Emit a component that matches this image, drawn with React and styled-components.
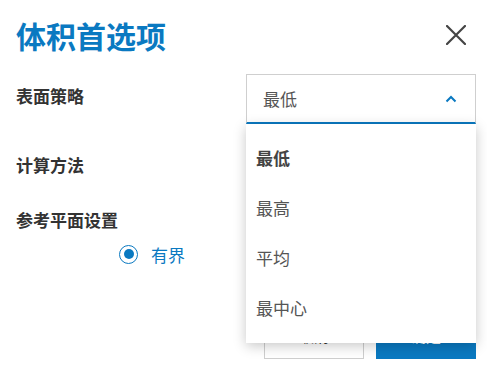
import React from "react";
import styled, { createGlobalStyle } from "styled-components";

const Global = createGlobalStyle`
  html, body { margin: 0; padding: 0; background: #fff; }
  body { font-family: "Noto Sans CJK SC", "Noto Sans", sans-serif; color: #333; }
  * { box-sizing: border-box; }
`;

const BLUE = "#0a79c1";

const Dialog = styled.div`
  width: 487px;
  height: 377px;
  padding: 11px 11px 0 16px;
  display: flex;
  flex-direction: column;
  overflow: hidden;
`;

const Header = styled.div`
  height: 48px;
  display: flex;
  align-items: center;
  justify-content: space-between;
`;

const Title = styled.h1`
  margin: 0;
  font-size: 30px;
  font-weight: 700;
  color: ${BLUE};
  line-height: 40px;
`;

const CloseButton = styled.button`
  width: 30px;
  height: 30px;
  margin-right: 5px;
  padding: 0;
  border: none;
  background: none;
  display: flex;
  align-items: center;
  justify-content: center;
`;

const Form = styled.div`
  margin-top: 15px;
  display: flex;
  flex-direction: column;
`;

const Row = styled.div`
  display: grid;
  grid-template-columns: 230px 230px;
  align-items: ${(p) => (p.$top ? "start" : "center")};
  min-height: ${(p) => p.$h || 50}px;
  margin-top: ${(p) => p.$mt || 0}px;
`;

const Label = styled.div`
  font-size: 17px;
  font-weight: 700;
  color: #333;
  line-height: 28px;
  margin-top: ${(p) => p.$offset || 0}px;
`;

const SelectWrap = styled.div`
  position: relative;
`;

const SelectBox = styled.div`
  height: 50px;
  border: 1px solid #cfcfcf;
  border-bottom: 2px solid ${BLUE};
  display: flex;
  align-items: center;
  justify-content: space-between;
  padding: 0 18px 0 16px;
  font-size: 17px;
  color: #555;
  background: #fff;
`;

const Menu = styled.ul`
  position: absolute;
  top: 100%;
  left: 0;
  width: 230px;
  margin: 0;
  padding: 8px 0 11px;
  list-style: none;
  background: #fff;
  box-shadow: 0 3px 12px rgba(0, 0, 0, 0.22);
  z-index: 5;
`;

const MenuItem = styled.li`
  height: 50px;
  display: flex;
  align-items: center;
  padding-left: 10px;
  font-size: 17px;
  font-weight: ${(p) => (p.$selected ? 700 : 400)};
  color: ${(p) => (p.$selected ? "#444" : "#555")};
`;

const RadioRow = styled.label`
  display: flex;
  align-items: center;
  gap: 13px;
  padding-left: 103px;
  margin-top: 7px;
  height: 26px;
  font-size: 17px;
  color: ${BLUE};
`;

const RadioOuter = styled.span`
  width: 19px;
  height: 19px;
  border-radius: 50%;
  border: 1.5px solid ${BLUE};
  display: flex;
  align-items: center;
  justify-content: center;
`;

const RadioDot = styled.span`
  width: 10px;
  height: 10px;
  border-radius: 50%;
  background: ${BLUE};
`;

const Footer = styled.div`
  margin-top: 44px;
  display: flex;
  justify-content: flex-end;
  gap: 12px;
`;

const Button = styled.button`
  width: 100px;
  height: 48px;
  font-family: inherit;
  font-size: 15px;
  border: ${(p) => (p.$primary ? "none" : "1px solid #cfcfcf")};
  background: ${(p) => (p.$primary ? BLUE : "#fff")};
  color: ${(p) => (p.$primary ? "#fff" : "#333")};
`;

const options = ["最低", "最高", "平均", "最中心"];

export default function App() {
  return (
    <>
      <Global />
      <Dialog>
        <Header>
          <Title>体积首选项</Title>
          <CloseButton aria-label="关闭">
            <svg width="20" height="20" viewBox="0 0 20 20">
              <path d="M1 1 L19 19 M19 1 L1 19" stroke="#444" strokeWidth="2.2" strokeLinecap="round" />
            </svg>
          </CloseButton>
        </Header>
        <Form>
          <Row $top>
            <Label $offset={8}>表面策略</Label>
            <SelectWrap>
              <SelectBox>
                <span>最低</span>
                <svg width="12" height="8" viewBox="0 0 12 8">
                  <path d="M1.5 6.5 L6 2 L10.5 6.5" fill="none" stroke={BLUE} strokeWidth="2" />
                </svg>
              </SelectBox>
              <Menu>
                {options.map((o, i) => (
                  <MenuItem key={o} $selected={i === 0}>
                    {o}
                  </MenuItem>
                ))}
              </Menu>
            </SelectWrap>
          </Row>
          <Row $mt={16}>
            <Label>计算方法</Label>
          </Row>
          <Row $h={28} $mt={16}>
            <Label>参考平面设置</Label>
          </Row>
          <RadioRow>
            <RadioOuter>
              <RadioDot />
            </RadioOuter>
            有界
          </RadioRow>
        </Form>
        <Footer>
          <Button>取消</Button>
          <Button $primary>确定</Button>
        </Footer>
      </Dialog>
    </>
  );
}
